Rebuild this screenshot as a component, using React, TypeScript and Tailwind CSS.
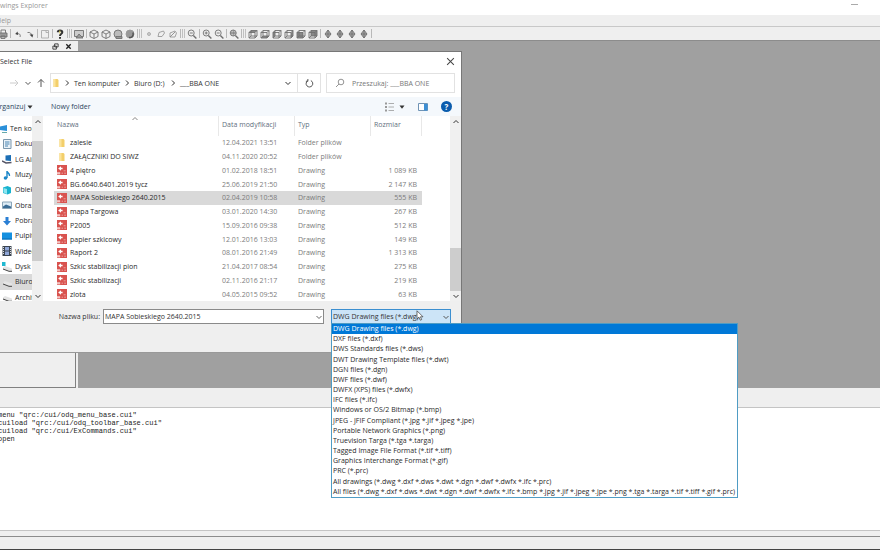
import { useState } from "react";
import type { ReactNode } from "react";

const fileTypes = [
  "DWG Drawing files (*.dwg)",
  "DXF files (*.dxf)",
  "DWS Standards files (*.dws)",
  "DWT Drawing Template files (*.dwt)",
  "DGN files (*.dgn)",
  "DWF files (*.dwf)",
  "DWFX (XPS) files (*.dwfx)",
  "IFC files (*.ifc)",
  "Windows or OS/2 Bitmap (*.bmp)",
  "JPEG - JFIF Compliant (*.jpg *.jif *.jpeg *.jpe)",
  "Portable Network Graphics (*.png)",
  "Truevision Targa (*.tga *.targa)",
  "Tagged Image File Format (*.tif *.tiff)",
  "Graphics Interchange Format (*.gif)",
  "PRC (*.prc)",
  "All drawings (*.dwg *.dxf *.dws *.dwt *.dgn *.dwf *.dwfx *.ifc *.prc)",
  "All files (*.dwg *.dxf *.dws *.dwt *.dgn *.dwf *.dwfx *.ifc *.bmp *.jpg *.jif *.jpeg *.jpe *.png *.tga *.targa *.tif *.tiff *.gif *.prc)",
];

const files = [
  { name: "zalesie", date: "12.04.2021 13:51", type: "Folder plików", size: "" },
  { name: "ZAŁĄCZNIKI DO SIWZ", date: "04.11.2020 20:52", type: "Folder plików", size: "" },
  { name: "4 piętro", date: "01.02.2018 18:51", type: "Drawing", size: "1 089 KB" },
  { name: "BG.6640.6401.2019 tycz", date: "25.06.2019 21:50", type: "Drawing", size: "2 147 KB" },
  { name: "MAPA Sobieskiego 2640.2015", date: "02.04.2019 10:58", type: "Drawing", size: "555 KB" },
  { name: "mapa Targowa", date: "03.01.2020 14:30", type: "Drawing", size: "267 KB" },
  { name: "P2005", date: "15.09.2016 09:38", type: "Drawing", size: "512 KB" },
  { name: "papier szkicowy", date: "12.01.2016 13:03", type: "Drawing", size: "149 KB" },
  { name: "Raport 2", date: "08.01.2016 21:49", type: "Drawing", size: "1 313 KB" },
  { name: "Szkic stabilizacji pion", date: "21.04.2017 08:54", type: "Drawing", size: "275 KB" },
  { name: "Szkic stabilizacji", date: "02.11.2016 21:17", type: "Drawing", size: "219 KB" },
  { name: "zlota", date: "04.05.2015 09:52", type: "Drawing", size: "63 KB" },
];

function Chevron({ dir, className }: { dir: "up" | "down" | "right"; className: string }) {
  const d = { up: "M1.5 5 4 2.5 6.5 5", down: "M1.5 3 4 5.5 6.5 3", right: "M3 1.5 5.5 4 3 6.5" }[dir];
  return (
    <svg viewBox="0 0 8 8" className={className} fill="none" stroke="currentColor" strokeWidth="1">
      <path d={d} />
    </svg>
  );
}

function FolderIcon() {
  return (
    <svg viewBox="0 0 10 10" className="size-[10px] shrink-0">
      <path d="M2.5 1h4l1 1v7h-5z" fill="#f3cf6b" />
      <path d="M2.5 1h2v8h-2z" fill="#fbe39b" />
    </svg>
  );
}

function DwgIcon() {
  return (
    <svg viewBox="0 0 10 10" className="size-[10px] shrink-0">
      <path d="M0 0h10v10H0z" fill="#d9534f" />
      <path d="M1.2 3.5 4 1.2v1.5h1.6v1.6H4v1.5z" fill="#fff" />
      <path d="M0 7.2h3.2v2.2H0z" fill="#f3c5c3" />
      <path d="M4.6 8.2h1.4M7.2 8.2h1.8M6.6 5.8h2" stroke="#eba3a0" strokeWidth="1" />
    </svg>
  );
}

/* ---------- Main window toolbar ---------- */

const cube = (
  <>
    <path d="M2 4 6 2l4 2v4.5L6 10.5 2 8.5z" />
    <path d="M2 4l4 2 4-2M6 6v4.5" />
  </>
);
const lens = (
  <>
    <circle cx="5.2" cy="5" r="3" />
    <path d="m7.4 7.4 3 3" strokeWidth="1.4" />
  </>
);
const viewCube = (shade: string) => (
  <>
    <path d={shade} fill="#888" stroke="none" />
    <path d="M2 4.5h6V10H2zM2 4.5 4 2.5h6L8 4.5M10 2.5V8L8 10M4 2.5V8h6M4 8l-2 2" />
  </>
);
const isoDiamond = (
  <>
    <path d="M6 2 9 6 6 10 3 6z" fill="#aaa" />
    <path d="M3 6h6M6 2v8" />
  </>
);

const tools: { label: string; grip?: boolean; icon: ReactNode }[][] = [
  [{ label: "Print", icon: <><path d="M2 5h8v4H2z" fill="#999" /><path d="M4 5V2h4.5v3M4 8h4v2.5H4z" /></> }],
  [
    { label: "Undo", icon: <><path d="M8 9C9 6.500 7 5 4.500 5.800" /><path d="M5.500 3.500 3.200 6l3 1z" fill="#444" stroke="none" /></> },
    { label: "Redo", icon: <><path d="M3.500 4.500C6 4 7.500 5.500 7.500 7" /><path d="M5.500 6.500h3.800L8.400 9.500z" fill="#444" stroke="none" /></> },
  ],
  [{ label: "Layout", icon: <path d="M2.500 2.500h7v7.500h-7zM7 2.500v2h2.500M2.500 4v1" stroke="#aaa" /> }],
  [{ label: "Help", icon: <><path d="M3.800 4.300C3.800 1.800 8.300 1.800 8.300 4.300 8.300 5.800 6 5.800 6 8" stroke="#333" strokeWidth="2" /><path d="M5 9h2v1.800H5z" fill="#333" stroke="none" /><path d="M5.800 2.500v3" stroke="#d8c84a" /></> }],
  [{ label: "Image", grip: true, icon: <><path d="M1.500 2.500h9v6h-9z" fill="#ccc" /><path d="m3 10 3-4 4 4z" fill="#999" /></> }],
  [
    { label: "Wireframe", icon: cube },
    { label: "Hidden", icon: cube },
    { label: "Flat", icon: <><circle cx="6" cy="6" r="4" fill="#bbb" /><path d="M4 8.500h6v2H4z" fill="#999" /></> },
    { label: "Shaded", icon: <><circle cx="6" cy="6" r="4" fill="#999" stroke="#999" /><path d="M9 4.500C10 8 7.500 10 5 9.500" stroke="#555" strokeWidth="1.500" /></> },
  ],
  [
    { label: "Point", grip: true, icon: <circle cx="6" cy="6" r="1.500" fill="#ccc" stroke="#aaa" /> },
    { label: "Region", icon: <path d="M3 8.500 4 4.500 8.500 3 9.500 5 7 8.500z" stroke="#999" /> },
    { label: "Surface", icon: <><path d="M3 9V5l5-2 1.500 2L8 9z" stroke="#999" /><path d="m3 9 5-5" stroke="#888" /></> },
  ],
  [{ label: "Zoom window", grip: true, icon: <>{lens}<path d="M3.800 5h3" /></> }],
  [
    { label: "Zoom in", icon: <>{lens}<path d="M3.700 5h3M5.200 3.500v3" /></> },
    { label: "Zoom out", icon: <>{lens}<path d="M3.700 5h3" /></> },
  ],
  [{ label: "Zoom extents", icon: <>{lens}<path d="M2.200 5h6M5.200 2v6" /><path d="M3.700 3v4M6.700 3v4" strokeWidth="0.500" /></> }],
  [
    { label: "Top view", grip: true, icon: viewCube("M2 4.500 4 2.500h6L8 4.500z") },
    { label: "Bottom view", icon: viewCube("M2 10 4 8h6l-2 2z") },
    { label: "Left view", icon: viewCube("M2 4.500 4 2.500V8l-2 2z") },
    { label: "Right view", icon: viewCube("M8 4.500 10 2.500V8l-2 2z") },
    { label: "Front view", icon: viewCube("M2 4.500h6V10H2z") },
    { label: "Back view", icon: viewCube("M4 2.500h6V8H4z") },
  ],
  [
    { label: "SW isometric", icon: isoDiamond },
    { label: "SE isometric", icon: isoDiamond },
    { label: "NE isometric", icon: isoDiamond },
    { label: "NW isometric", icon: isoDiamond },
  ],
];

function ToolBar() {
  return (
    <div className="-ml-[3px] flex h-[14px] items-stretch border-b border-[#8c8c8c] bg-[#efefef]">
      {tools.map((group) => (
        <div key={group[0].label} className="flex items-stretch">
          {group[0].grip && (
            <span className="flex w-1 py-[2px]">
              <span className="w-[3px] border-x border-[#c0c0c0]" />
            </span>
          )}
          {group.map((tool) => (
            <button key={tool.label} aria-label={tool.label} className="flex w-3 items-center justify-center">
              <svg viewBox="0 0 12 12" className="size-3" fill="none" stroke="#707070" strokeWidth="0.900">
                {tool.icon}
              </svg>
            </button>
          ))}
          <span className="flex w-[3px] justify-center py-[2px]">
            <span className="w-px bg-[#b8b8b8]" />
          </span>
        </div>
      ))}
    </div>
  );
}

/* ---------- Dialog sidebar ---------- */

const drive = (
  <>
    <path d="M1 5.500 3 4l7 2.500V9L8 9.500 1 7.500z" fill="#e4e4e4" />
    <path d="m1 7 6 2.300h3" stroke="#444" strokeWidth="1" fill="none" />
  </>
);

const places: { name: string; icon: ReactNode; indent: boolean }[] = [
  { name: "Ten komputer", indent: false, icon: <><path d="M0 2.500 7 1v6L0 6z" fill="#2b90d9" /><path d="M2 8.500h5" stroke="#6aa" /></> },
  { name: "Dokumenty", indent: true, icon: <><path d="M1.500.500h7.500v9H1.500z" fill="#eaf2f8" stroke="#7b97ad" /><path d="M3 3h4.500M3 5h4.500M3 7h3" stroke="#4b86b4" /></> },
  { name: "LG Air", indent: true, icon: <><path d="M3.500 1.500 9 1v6l-5.500-.500z" fill="#1c6fb5" /><path d="m0 7 4 2 5.500-.500" stroke="#556" strokeWidth="1.500" fill="none" /></> },
  { name: "Muzyka", indent: true, icon: <><path d="M5 1v7M5 1c0 2 3 2 2.500 5" stroke="#1b86c8" strokeWidth="1.400" fill="none" /><circle cx="3.500" cy="8" r="1.800" fill="#1b86c8" /></> },
  { name: "Obiekty 3D", indent: true, icon: <><path d="M1 2.500 5.500 1 9 2.500V8L5.500 9.500 1 8z" fill="#19b3cf" /><path d="M1.500 3 5 4v5l-3.500-1.500z" fill="#8ee6f0" /></> },
  { name: "Obrazy", indent: true, icon: <><path d="M.500 2h9v6.500h-9z" fill="#dcebf5" stroke="#8aa5b8" /><path d="M1 6.500 4 4.500l5 2V8H1z" fill="#3b6d96" /></> },
  { name: "Pobrane", indent: true, icon: <path d="M3.500 1h3v4H9L5 9.500 1 5h2.500z" fill="#2a7fd4" /> },
  { name: "Pulpit", indent: true, icon: <><path d="M0 1.500h10v7H0z" fill="#1590e0" /><path d="M0 7.500h10v1H0z" fill="#0b6bb0" /></> },
  { name: "Wideo", indent: true, icon: <><path d="M.500 0h9v10h-9z" fill="#3a4450" /><path d="M3 1h4v3.500H3zM3 5.500h4V9H3z" fill="#8fa6d8" /><path d="M1.500 1v8M8.500 1v8" stroke="#ddd" strokeDasharray="1 1" /></> },
  { name: "Dysk (C:)", indent: true, icon: <>{drive}<path d="M0 0h3.500v4H0z" fill="#20b8d0" /></> },
  { name: "Biuro (D:)", indent: true, icon: drive },
  { name: "Archiwum", indent: true, icon: drive },
];

function ScrollBar({ thumb }: { thumb: string }) {
  return (
    <div className="flex w-[11px] shrink-0 flex-col items-center bg-[#f0f0f0] text-[#333]">
      <Chevron dir="up" className="mt-[2px] size-2 shrink-0" />
      <div className="flex w-full flex-1 flex-col">
        <div className={thumb} />
      </div>
      <Chevron dir="down" className="mb-px size-2 shrink-0" />
    </div>
  );
}

function Sidebar() {
  return (
    <nav aria-label="Foldery" className="flex w-[43px] shrink-0">
      <ul className="mt-[5px] grid h-[184px] w-8 auto-rows-fr overflow-hidden">
        {places.map((p) => (
          <li key={p.name} className={p.name === "Biuro (D:)" ? "bg-[#d9d9d9]" : ""}>
            <button className={p.indent ? "flex h-full w-full items-center gap-[3px] pl-[2px]" : "flex h-full w-full items-center"}>
              <svg viewBox="0 0 10 10" className="size-[10px] shrink-0">{p.icon}</svg>
              <span className="whitespace-nowrap">{p.name}</span>
            </button>
          </li>
        ))}
      </ul>
      <ScrollBar thumb="mt-[15px] h-[120px] w-full bg-[#cdcdcd]" />
    </nav>
  );
}

/* ---------- Dialog ---------- */

function FileTable({ selected, onSelect }: { selected: string; onSelect: (name: string) => void }) {
  const head = "border-r border-[#e8e8e8] p-0 pb-[3px] pl-[3px] text-left font-normal";
  return (
    <div className="min-w-0 flex-1 pl-[11px]">
      <table className="h-[185px] w-[368px] table-fixed border-separate border-spacing-0">
        <colgroup>
          <col className="w-[165px]" />
          <col className="w-[76px]" />
          <col className="w-[76px]" />
          <col className="w-[51px]" />
        </colgroup>
        <thead className="text-[#5f6f80]">
          <tr className="h-5">
            <th className={head}>
              <span className="relative block">
                Nazwa
                <Chevron dir="up" className="absolute -top-[3px] left-[74px] size-2 text-[#888]" />
              </span>
            </th>
            <th className={head}>Data modyfikacji</th>
            <th className={head}>Typ</th>
            <th className={head}>Rozmiar</th>
          </tr>
        </thead>
        <tbody className="text-[#7c7c7c]">
          {files.map((f) => (
            <tr key={f.name} onClick={() => onSelect(f.name)} className={f.name === selected ? "bg-[#d9d9d9]" : ""}>
              <td className="p-0">
                <span className="flex items-center gap-[3px] pl-[3px] text-[#2a2a2a]">
                  {f.type === "Drawing" ? <DwgIcon /> : <FolderIcon />}
                  {f.name}
                </span>
              </td>
              <td className="p-0 pl-[3px]">{f.date}</td>
              <td className="p-0 pl-[3px]">{f.type}</td>
              <td className="p-0 pr-[5px] text-right">{f.size}</td>
            </tr>
          ))}
        </tbody>
      </table>
    </div>
  );
}

function SelectFileDialog() {
  const [name, setName] = useState("MAPA Sobieskiego 2640.2015");
  const [type, setType] = useState(fileTypes[0]);

  return (
    <section
      role="dialog"
      aria-label="Select File"
      className="absolute top-[51px] left-0 flex w-[462px] flex-col border-t border-r border-[#777] bg-white leading-[13px]"
    >
      <header className="flex h-[21px] items-center justify-between pr-[6px] pb-[2px]">
        <h2>Select File</h2>
        <button aria-label="Close">
          <svg viewBox="0 0 8 8" className="size-[9px]" stroke="#444" strokeWidth="0.900">
            <path d="m1 1 6 6M7 1 1 7" />
          </svg>
        </button>
      </header>

      <div className="flex h-6 items-start pr-[6px]">
        <div className="flex h-5 w-[50px] items-center gap-[5px] pl-[9px] text-[#555]">
          <svg viewBox="0 0 10 10" className="size-[10px] shrink-0" fill="none" stroke="#ccc"><path d="M1 5h8M6 2l3 3-3 3" /></svg>
          <Chevron dir="down" className="size-2 shrink-0" />
          <svg viewBox="0 0 10 10" className="-mx-px size-[10px] shrink-0" fill="none" stroke="#555"><path d="M5 9V1.500M2 4.500l3-3 3 3" /></svg>
        </div>
        <div className="flex h-5 w-[271px] items-center border border-[#e2e2e2]">
          <FolderIcon />
          <Chevron dir="right" className="mx-[2px] size-2 shrink-0" />
          <button className="w-[48px] pl-px text-left whitespace-nowrap">Ten komputer</button>
          <Chevron dir="right" className="mx-[2px] size-2 shrink-0" />
          <button className="w-[34px] pl-px text-left whitespace-nowrap">Biuro (D:)</button>
          <Chevron dir="right" className="mx-[2px] size-2 shrink-0" />
          <span className="flex-1 pl-px whitespace-nowrap">___BBA ONE</span>
          <Chevron dir="down" className="mr-[5px] size-2 shrink-0" />
          <button aria-label="Odśwież" className="flex h-full w-[23px] items-center justify-center border-l border-[#e2e2e2]">
            <svg viewBox="0 0 10 10" className="size-[9px]" fill="none" stroke="#444">
              <path d="M6.500 1.800A3.700 3.700 0 1 1 3 2M3.200 0v2.500H1" />
            </svg>
          </button>
        </div>
        <label className="ml-[5px] flex h-5 flex-1 items-center gap-[7px] border border-[#e2e2e2] pl-2">
          <svg viewBox="0 0 10 10" className="size-[10px] shrink-0" fill="none" stroke="#888" strokeWidth="0.900">
            <circle cx="6" cy="4" r="2.800" />
            <path d="M4 6 1 9" />
          </svg>
          <input
            aria-label="Przeszukaj"
            placeholder="Przeszukaj: ___BBA ONE"
            className="w-full min-w-0 bg-transparent outline-none placeholder:text-[#777]"
          />
        </label>
      </div>

      <div className="flex h-[19px] items-center overflow-hidden bg-[#f4f8fc] pr-[9px] text-[#2d4560]">
        <button className="-ml-[6px] flex w-[57px] items-center gap-[2px]">
          Organizuj
          <svg viewBox="0 0 6 6" className="size-[6px]"><path d="M.500 1.500h5L3 4.800z" fill="#333" /></svg>
        </button>
        <button className="flex-1 text-left">Nowy folder</button>
        <button aria-label="Widok" className="flex items-center gap-[5px]">
          <svg viewBox="0 0 10 10" className="size-[10px]" stroke="#999" fill="none">
            <path d="M1 1.500h2M1 5h2M1 8.500h2" strokeWidth="2" />
            <path d="M4.500 1.500H10M4.500 5H10M4.500 8.500H10" strokeWidth="0.800" />
          </svg>
          <svg viewBox="0 0 6 6" className="size-[6px]"><path d="M.500 1.500h5L3 4.800z" fill="#333" /></svg>
        </button>
        <button aria-label="Podgląd" className="ml-[13px]">
          <svg viewBox="0 0 10 8" className="h-[8px] w-[10px]">
            <path d="M.500.500h9v7h-9z" fill="#fff" stroke="#6f93b5" />
            <path d="M6 1h3.500v6.500H6z" fill="#3d8fd4" />
          </svg>
        </button>
        <button aria-label="Pomoc" className="ml-[13px] flex size-[11px] items-center justify-center rounded-full bg-[#0b5cad] text-[8px] font-bold text-white">
          ?
        </button>
      </div>

      <div className="flex h-[185px] overflow-hidden text-[#2a2a2a]">
        <Sidebar />
        <FileTable selected={name} onSelect={setName} />
        <ScrollBar thumb="mt-auto mb-px h-[43px] w-full bg-[#cdcdcd]" />
      </div>

      <div className="flex h-[52px] items-start border-b border-[#999] bg-[#efefef] pt-2">
        <label htmlFor="file-name" className="w-[103px] pt-px pr-[3px] text-right whitespace-nowrap">
          Nazwa pliku:
        </label>
        <div className="relative w-[221px]">
          <input
            id="file-name"
            value={name}
            onChange={(e) => setName(e.target.value)}
            className="block h-[15px] w-full border border-[#8a8a8a] bg-white pr-3 pl-px outline-none"
          />
          <Chevron dir="down" className="absolute top-[4px] right-px size-2 text-[#666]" />
        </div>
        <div className="relative ml-[7px] w-[120px]">
          <select
            aria-label="Typ pliku"
            value={type}
            onChange={(e) => setType(e.target.value)}
            className="block h-[15px] w-full appearance-none border border-[#3c8fd0] bg-[#cce4f7] pr-3 pl-px outline-none"
          >
            {fileTypes.map((t) => (
              <option key={t}>{t}</option>
            ))}
          </select>
          <Chevron dir="down" className="absolute top-[4px] right-px size-2 text-[#555]" />
          <ul
            role="listbox"
            aria-label="Typy plików"
            className="absolute top-[14px] left-0 grid h-[175px] min-w-[407px] auto-rows-fr border border-[#4f9cc4] bg-white leading-[10px] whitespace-nowrap text-[#2a2a2a]"
          >
            {fileTypes.map((t) => (
              <li
                key={t}
                role="option"
                aria-selected={t === type}
                onClick={() => setType(t)}
                className={t === type ? "bg-[#0078d7] pl-px text-white" : "pl-px"}
              >
                {t}
              </li>
            ))}
          </ul>
          <svg viewBox="0 0 8 12" className="absolute top-[1px] left-[85px] h-3 w-2">
            <path d="M1 .800v8l2-1.600 1.300 3 1.400-.600-1.300-2.800H7z" fill="#fff" stroke="#333" strokeWidth="0.700" />
          </svg>
        </div>
      </div>
    </section>
  );
}

export default function App() {
  return (
    <main className="relative flex min-h-screen w-full flex-col overflow-hidden bg-[#efefef] font-['Open_Sans','Noto_Sans',sans-serif] text-[7px] leading-[12px] text-[#333]">
      <header className="flex h-[15px] items-start justify-between bg-white pr-[22px] text-[#999]">
        <h1 className="leading-[11px]">wings Explorer</h1>
        <button aria-label="Minimize" className="mt-1 h-px w-[7px] bg-[#aaa]" />
      </header>
      <div className="-ml-[4px] flex h-3 items-center border-b border-[#c8c8c8] pt-px text-[#999]">
        <button>Help</button>
      </div>
      <ToolBar />

      <div className="flex h-[347px]">
        <aside className="flex w-[78px] flex-col pr-[2px]">
          <div className="flex h-[10px] items-center justify-end gap-[6px] pr-1">
            <button aria-label="Float">
              <svg viewBox="0 0 8 8" className="size-[7px]" fill="none" stroke="#333">
                <path d="M3 1h4v3.500H3zM1 3.500h4V7H1z" />
              </svg>
            </button>
            <button aria-label="Close panel">
              <svg viewBox="0 0 8 8" className="size-[7px]" stroke="#222" strokeWidth="1.600">
                <path d="m1.500 1.500 5 5M6.500 1.500l-5 5" />
              </svg>
            </button>
          </div>
          <div className="flex-1 border-r border-b border-[#808080]" />
        </aside>
        <div className="flex-1 bg-[#a0a0a0]" />
      </div>

      <div className="mt-[19px] flex-1 overflow-hidden border-y border-[#c4c4c4] bg-white pt-[3px]">
        <pre className="-ml-[2px] font-['Liberation_Mono',monospace] text-[7px] leading-[8px] text-[#222]">
          {`menu "qrc:/cui/odq_menu_base.cui"
cuiload "qrc:/cui/odq_toolbar_base.cui"
cuiload "qrc:/cui/ExCommands.cui"
open`}
        </pre>
      </div>
      <div className="h-[6px] border-b border-[#8c8c8c]" />
      <footer className="h-[13px] border-b border-[#444]" />

      <SelectFileDialog />
    </main>
  );
}
